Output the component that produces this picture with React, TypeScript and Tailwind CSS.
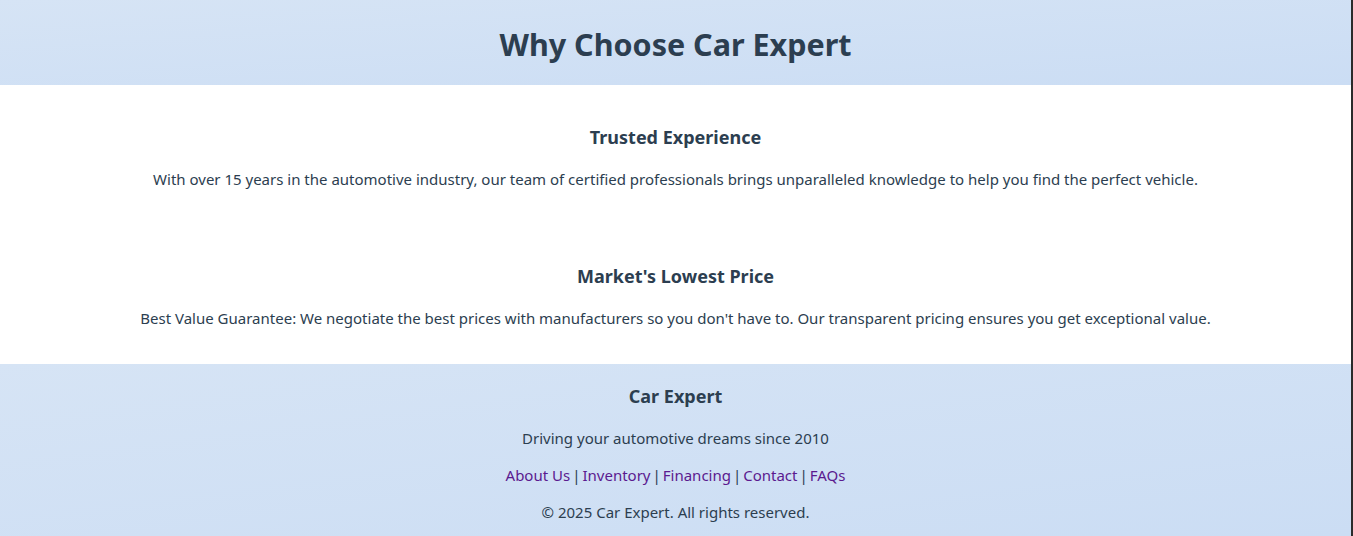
const font = { fontFamily: '"Noto Sans", "Open Sans", sans-serif' };

function Section({ title, text }: { title: string; text: string }) {
  return (
    <section className="flex flex-col items-center text-center">
      <h3 className="text-[18px] leading-[26px] font-bold">{title}</h3>
      <p className="mt-[17px] text-[15px] leading-[24px]">{text}</p>
    </section>
  );
}

export default function App() {
  const links = ['About Us', 'Inventory', 'Financing', 'Contact', 'FAQs'];
  return (
    <div className="flex h-[536px] w-full bg-[#2b2b2b] text-[#2c3e50]" style={font}>
      <div className="flex flex-1 flex-col bg-white mr-[2px]">
        <header className="flex h-[85px] items-center justify-center bg-gradient-to-br from-[#d6e4f5] to-[#cbddf4] pt-[3px]">
          <h1 className="text-[30.5px] leading-[42px] font-bold">Why Choose Car Expert</h1>
        </header>

        <main className="flex flex-col gap-[72px] pt-[39px] pb-[34px]">
          <Section
            title="Trusted Experience"
            text="With over 15 years in the automotive industry, our team of certified professionals brings unparalleled knowledge to help you find the perfect vehicle."
          />
          <Section
            title="Market's Lowest Price"
            text="Best Value Guarantee: We negotiate the best prices with manufacturers so you don't have to. Our transparent pricing ensures you get exceptional value."
          />
        </main>

        <footer className="flex flex-1 flex-col items-center bg-gradient-to-br from-[#d6e4f5] to-[#cbddf4] pt-[19px] text-center">
          <h3 className="text-[18px] leading-[26px] font-bold">Car Expert</h3>
          <p className="mt-[17px] text-[15px] leading-[24px]">Driving your automotive dreams since 2010</p>
          <p className="mt-[13px] text-[15px] leading-[24px]">
            {links.map((l, i) => (
              <span key={l}>
                {i > 0 && <span className="mx-[2px]">|</span>}
                <a href="#" className="text-[#5b1a8f]">{l}</a>
              </span>
            ))}
          </p>
          <p className="mt-[13px] text-[15px] leading-[24px]">© 2025 Car Expert. All rights reserved.</p>
        </footer>
      </div>
    </div>
  );
}
